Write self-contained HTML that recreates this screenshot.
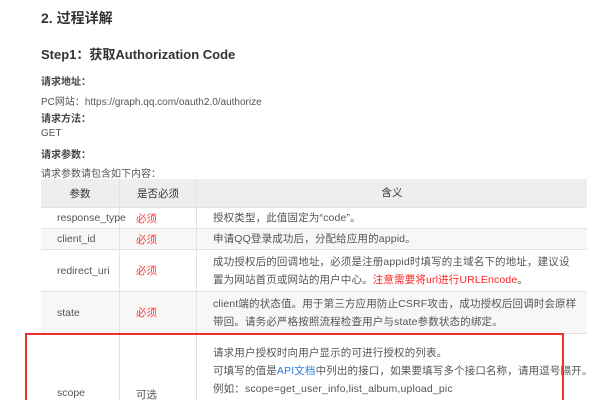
<!DOCTYPE html>
<html><head><meta charset="utf-8"><style>
*{margin:0;padding:0;box-sizing:border-box}
html,body{width:600px;height:400px;overflow:hidden}
body{background:#fff;font-family:"Liberation Sans","Noto Sans CJK SC",sans-serif;color:#555;position:relative}
.a{position:absolute;white-space:nowrap}
h1{position:absolute;left:41px;top:8px;font-size:14px;font-weight:bold;color:#333}
h2{position:absolute;left:41px;top:44px;font-size:13px;font-weight:bold;color:#333}
.t{font-size:10px;left:41px}
.b{font-weight:bold;color:#444}
.row{position:absolute;left:41px;width:546px;border-top:1px solid #e3e3e3;overflow:hidden}
.c{position:absolute;top:0;bottom:0;border-right:1px solid #e3e3e3;font-size:10.5px;display:flex;align-items:center}
.c1{left:0;width:79px;padding-left:16px}
.c2{left:79px;width:77px;padding-left:16px}
.c3{left:156px;right:0;border-right:none;padding-left:16px;padding-right:8px;line-height:18px;white-space:normal;font-size:10.5px;letter-spacing:0.15px}
.req{color:#f33}
.red{color:#f22}
.blue{color:#2a7ae2}
</style></head><body>
<h1>2. 过程详解</h1>
<h2>Step1：获取Authorization Code</h2>
<div class="a t b" style="top:73px">请求地址：</div>
<div class="a t" style="top:93px">PC网站：https://graph.qq.com/oauth2.0/authorize</div>
<div class="a t b" style="top:110px">请求方法：</div>
<div class="a t" style="top:128px">GET</div>
<div class="a t b" style="top:146px">请求参数：</div>
<div class="a t" style="top:165px">请求参数请包含如下内容：</div>

<div class="row" style="top:179px;height:28px;background:#eee;border-top:none">
<div class="c c1" style="justify-content:center;padding:0;color:#333">参数</div>
<div class="c c2" style="justify-content:center;padding:0;color:#333">是否必须</div>
<div class="c c3" style="justify-content:center;padding:0;color:#333">含义</div></div>
<div class="row" style="top:207px;height:21px;background:#fff">
<div class="c c1">response_type</div><div class="c c2 req">必须</div><div class="c c3">授权类型，此值固定为“code”。</div></div>
<div class="row" style="top:228px;height:21px;background:#f7f7f7">
<div class="c c1">client_id</div><div class="c c2 req">必须</div><div class="c c3">申请QQ登录成功后，分配给应用的appid。</div></div>
<div class="row" style="top:249px;height:42px;background:#fff">
<div class="c c1">redirect_uri</div><div class="c c2 req">必须</div><div class="c c3"><div>成功授权后的回调地址，必须是注册appid时填写的主域名下的地址，建议设置为网站首页或网站的用户中心。<span class="red">注意需要将url进行URLEncode</span>。</div></div></div>
<div class="row" style="top:291px;height:42px;background:#f7f7f7">
<div class="c c1">state</div><div class="c c2 req">必须</div><div class="c c3"><div>client端的状态值。用于第三方应用防止CSRF攻击，成功授权后回调时会原样带回。请务必严格按照流程检查用户与state参数状态的绑定。</div></div></div>
<div class="row" style="top:333px;height:67px;background:#fff">
<div class="c c1" style="align-items:flex-start;padding-top:53px">scope</div><div class="c c2" style="align-items:flex-start;padding-top:53px">可选</div><div class="c c3" style="align-items:flex-start;padding-top:10px;white-space:nowrap"><div>请求用户授权时向用户显示的可进行授权的列表。<br>可填写的值是<span class="blue">API文档</span>中列出的接口，如果要填写多个接口名称，请用逗号隔开。<br>例如：scope=get_user_info,list_album,upload_pic<br>不传则默认请求对接口get_user_info进行授权。</div></div></div>
<div style="position:absolute;left:25px;top:333px;width:539px;height:67px;border:2px solid #e8322e;border-bottom:none"></div>
</body></html>
